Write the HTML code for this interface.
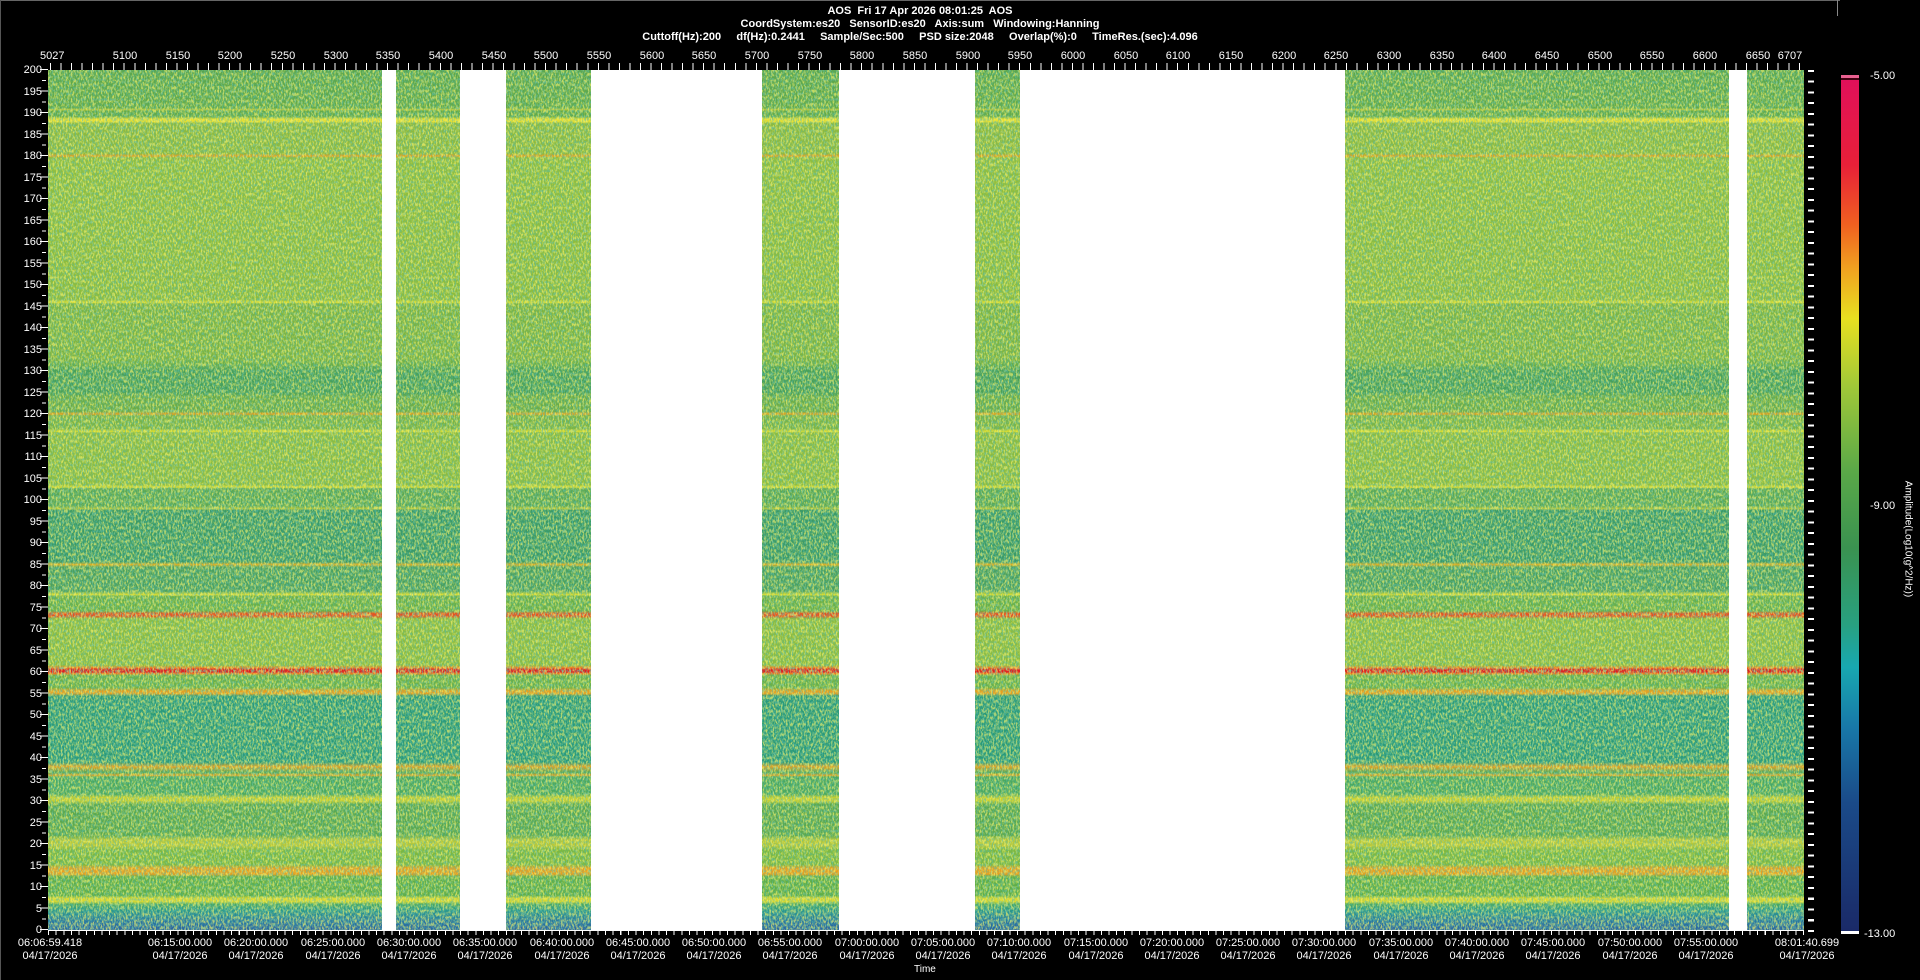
<!DOCTYPE html>
<html><head><meta charset="utf-8">
<style>
html,body{margin:0;padding:0;background:#000;}
body{width:1920px;height:980px;position:relative;overflow:hidden;font-family:"Liberation Sans",Arial,sans-serif;color:#fff;font-size:11px;}
.t{position:absolute;white-space:nowrap;}
.h{position:absolute;left:0;width:1840px;text-align:center;font-weight:bold;font-size:11px;white-space:pre;}
#plot{position:absolute;left:48px;top:70px;width:1756px;height:860px;
background:linear-gradient(to top,
#2a62a0 0%,#2a78a0 1%,#2a9a8c 2.3%,#4aa862 3%,#d8d830 3.3%,#d8d830 3.7%,#5fae48 4%,#5fae48 6.2%,#e8a020 6.5%,#e8a020 7.2%,#7cb840 7.6%,#7cb840 9.3%,#b8c838 9.8%,#b8c838 10.5%,#5aa850 11%,#5aa850 14.6%,#c8d030 15%,#c8d030 15.4%,#4aa860 15.8%,#4aa860 17.8%,#e8a020 18%,#4aa860 18.3%,#e8a020 19%,#2a9a7a 19.5%,#2a9a7a 27.2%,#e8a020 27.5%,#e8a020 27.8%,#6ab048 28.2%,#6ab048 29.6%,#f08020 29.8%,#e02020 30%,#e02020 30.3%,#f08020 30.5%,#8cbc40 30.8%,#8cbc40 36.2%,#e85020 36.5%,#e85020 36.8%,#6ab048 37.1%,#6ab048 38.8%,#e0e030 39%,#4aa060 39.4%,#4aa060 42.2%,#e8b020 42.5%,#3a9a68 42.8%,#3a9a68 48.8%,#b8c838 49%,#5aa855 49.3%,#5aa855 51.3%,#e0e030 51.5%,#8cbc40 51.8%,#8cbc40 57.8%,#e0e030 58%,#7ab445 58.3%,#7ab445 59.8%,#e8a020 60%,#6aac48 60.3%,#6aac48 62%,#48a05a 62.5%,#48a05a 65%,#6aae48 65.8%,#7cb442 66.5%,#7cb442 72.8%,#e0e030 73%,#8cbc3e 73.3%,#90be3e 89.8%,#e8a020 90%,#8cba40 90.3%,#8cba40 93.8%,#e8e030 94%,#e8e030 94.3%,#62aa4a 94.6%,#62aa4a 95.2%,#b8c838 95.4%,#62aa4a 95.6%,#5aa64e 100%);}
#plot svg{position:absolute;left:0;top:0;}
.gap{position:absolute;top:0;height:860px;background:#fff;}
.yl{position:absolute;right:1878px;text-align:right;font-size:11px;line-height:12px;}
.xl{position:absolute;top:50px;transform:translateX(-50%);font-size:11px;}
.bl{position:absolute;top:937px;transform:translateX(-50%);font-size:11px;line-height:13px;text-align:center;}
</style></head><body>
<div style="position:absolute;left:0;top:0;width:1840px;height:1px;background:#666"></div>
<div style="position:absolute;left:0;top:0;width:1px;height:980px;background:#555"></div>
<div style="position:absolute;left:1837px;top:0;width:1px;height:16px;background:#888"></div>
<div class="h" style="top:5px">AOS  Fri 17 Apr 2026 08:01:25  AOS</div>
<div class="h" style="top:18px">CoordSystem:es20   SensorID:es20   Axis:sum   Windowing:Hanning</div>
<div class="h" style="top:31px">Cuttoff(Hz):200     df(Hz):0.2441     Sample/Sec:500     PSD size:2048     Overlap(%):0     TimeRes.(sec):4.096</div>

<div id="plot">
<svg width="1756" height="860"><filter id="n" x="0" y="0" width="100%" height="100%"><feTurbulence type="fractalNoise" baseFrequency="0.6 0.3" numOctaves="2" seed="3"/><feColorMatrix type="matrix" values="0 0 0 0 0.88  0 0 0 0 0.88  0 0 0 0 0.15  0 0 0 4 -1.7"/></filter><rect width="1756" height="860" filter="url(#n)" opacity="0.7"/><filter id="m" x="0" y="0" width="100%" height="100%"><feTurbulence type="fractalNoise" baseFrequency="0.7 0.35" numOctaves="2" seed="9"/><feColorMatrix type="matrix" values="0 0 0 0 0.1  0 0 0 0 0.5  0 0 0 0 0.4  0 0 0 4 -1.8"/></filter><rect width="1756" height="860" filter="url(#m)" opacity="0.6"/></svg>
<div class="gap" style="left:334px;width:14px"></div>
<div class="gap" style="left:412px;width:46px"></div>
<div class="gap" style="left:543px;width:171px"></div>
<div class="gap" style="left:791px;width:136px"></div>
<div class="gap" style="left:972px;width:325px"></div>
<div class="gap" style="left:1681px;width:18px"></div>
</div>

<div style="position:absolute;left:40px;top:69px;width:8px;height:862px;background:repeating-linear-gradient(to bottom,#fff 0,#fff 1px,transparent 1px,transparent 21.5px)"></div>
<div style="position:absolute;left:42px;top:79.75px;width:4px;height:850px;background:repeating-linear-gradient(to bottom,#fff 0,#fff 1px,transparent 1px,transparent 21.5px)"></div>
<div style="position:absolute;left:1808px;top:70px;width:6px;height:862px;background:repeating-linear-gradient(to bottom,#fff 0,#fff 2px,transparent 2px,transparent 10.75px)"></div>
<div style="position:absolute;left:48px;top:63px;width:1756px;height:7px;background:repeating-linear-gradient(to right,transparent 0,transparent 2px,#fff 2px,#fff 3px,transparent 3px,transparent 10.535px)"></div>
<div style="position:absolute;left:48px;top:930px;width:1756px;height:5px;background:repeating-linear-gradient(to right,#fff 0,#fff 1px,transparent 1px,transparent 7.63px)"></div>
<div style="position:absolute;left:48px;top:930px;width:1756px;height:1px;background:#fff"></div>

<div class="t" style="left:40px;top:50px">5027</div>
<div class="xl" style="left:125px">5100</div><div class="xl" style="left:178px">5150</div><div class="xl" style="left:230px">5200</div><div class="xl" style="left:283px">5250</div><div class="xl" style="left:336px">5300</div><div class="xl" style="left:388px">5350</div><div class="xl" style="left:441px">5400</div><div class="xl" style="left:494px">5450</div><div class="xl" style="left:546px">5500</div><div class="xl" style="left:599px">5550</div><div class="xl" style="left:652px">5600</div><div class="xl" style="left:704px">5650</div><div class="xl" style="left:757px">5700</div><div class="xl" style="left:810px">5750</div><div class="xl" style="left:862px">5800</div><div class="xl" style="left:915px">5850</div><div class="xl" style="left:968px">5900</div><div class="xl" style="left:1020px">5950</div><div class="xl" style="left:1073px">6000</div><div class="xl" style="left:1126px">6050</div><div class="xl" style="left:1178px">6100</div><div class="xl" style="left:1231px">6150</div><div class="xl" style="left:1284px">6200</div><div class="xl" style="left:1336px">6250</div><div class="xl" style="left:1389px">6300</div><div class="xl" style="left:1442px">6350</div><div class="xl" style="left:1494px">6400</div><div class="xl" style="left:1547px">6450</div><div class="xl" style="left:1600px">6500</div><div class="xl" style="left:1652px">6550</div><div class="xl" style="left:1705px">6600</div><div class="xl" style="left:1758px">6650</div><div class="xl" style="left:1790px">6707</div>

<div class="yl" style="top:64px">200</div><div class="yl" style="top:85.5px">195</div><div class="yl" style="top:107px">190</div><div class="yl" style="top:128.5px">185</div><div class="yl" style="top:150px">180</div><div class="yl" style="top:171.5px">175</div><div class="yl" style="top:193px">170</div><div class="yl" style="top:214.5px">165</div><div class="yl" style="top:236px">160</div><div class="yl" style="top:257.5px">155</div><div class="yl" style="top:279px">150</div><div class="yl" style="top:300.5px">145</div><div class="yl" style="top:322px">140</div><div class="yl" style="top:343.5px">135</div><div class="yl" style="top:365px">130</div><div class="yl" style="top:386.5px">125</div><div class="yl" style="top:408px">120</div><div class="yl" style="top:429.5px">115</div><div class="yl" style="top:451px">110</div><div class="yl" style="top:472.5px">105</div><div class="yl" style="top:494px">100</div><div class="yl" style="top:515.5px">95</div><div class="yl" style="top:537px">90</div><div class="yl" style="top:558.5px">85</div><div class="yl" style="top:580px">80</div><div class="yl" style="top:601.5px">75</div><div class="yl" style="top:623px">70</div><div class="yl" style="top:644.5px">65</div><div class="yl" style="top:666px">60</div><div class="yl" style="top:687.5px">55</div><div class="yl" style="top:709px">50</div><div class="yl" style="top:730.5px">45</div><div class="yl" style="top:752px">40</div><div class="yl" style="top:773.5px">35</div><div class="yl" style="top:795px">30</div><div class="yl" style="top:816.5px">25</div><div class="yl" style="top:838px">20</div><div class="yl" style="top:859.5px">15</div><div class="yl" style="top:881px">10</div><div class="yl" style="top:902.5px">5</div><div class="yl" style="top:924px">0</div>

<div class="bl" style="left:50px">06:06:59.418<br>04/17/2026</div>
<div class="bl" style="left:180px">06:15:00.000<br>04/17/2026</div><div class="bl" style="left:256px">06:20:00.000<br>04/17/2026</div><div class="bl" style="left:333px">06:25:00.000<br>04/17/2026</div><div class="bl" style="left:409px">06:30:00.000<br>04/17/2026</div><div class="bl" style="left:485px">06:35:00.000<br>04/17/2026</div><div class="bl" style="left:562px">06:40:00.000<br>04/17/2026</div><div class="bl" style="left:638px">06:45:00.000<br>04/17/2026</div><div class="bl" style="left:714px">06:50:00.000<br>04/17/2026</div><div class="bl" style="left:790px">06:55:00.000<br>04/17/2026</div><div class="bl" style="left:867px">07:00:00.000<br>04/17/2026</div><div class="bl" style="left:943px">07:05:00.000<br>04/17/2026</div><div class="bl" style="left:1019px">07:10:00.000<br>04/17/2026</div><div class="bl" style="left:1096px">07:15:00.000<br>04/17/2026</div><div class="bl" style="left:1172px">07:20:00.000<br>04/17/2026</div><div class="bl" style="left:1248px">07:25:00.000<br>04/17/2026</div><div class="bl" style="left:1324px">07:30:00.000<br>04/17/2026</div><div class="bl" style="left:1401px">07:35:00.000<br>04/17/2026</div><div class="bl" style="left:1477px">07:40:00.000<br>04/17/2026</div><div class="bl" style="left:1553px">07:45:00.000<br>04/17/2026</div><div class="bl" style="left:1630px">07:50:00.000<br>04/17/2026</div><div class="bl" style="left:1706px">07:55:00.000<br>04/17/2026</div><div class="bl" style="left:1807px">08:01:40.699<br>04/17/2026</div>
<div class="t" style="left:914px;top:964px;font-size:10px">Time</div>

<div style="position:absolute;left:1841px;top:75px;width:18px;height:3px;background:#e86090"></div>
<div style="position:absolute;left:1841px;top:78px;width:18px;height:2px;background:#400010"></div>
<div style="position:absolute;left:1841px;top:80px;width:18px;height:851px;background:linear-gradient(to bottom,#e0105a 0%,#e82038 10%,#f06020 17%,#f0a020 22%,#e8e020 28%,#a0c838 36%,#5aa848 46%,#3a9250 55%,#28a080 64%,#18a8b0 69%,#1878a8 76%,#1a4a88 85%,#1a2a68 100%)"></div>
<div style="position:absolute;left:1841px;top:931px;width:18px;height:3px;background:#fff"></div>
<div class="t" style="left:1870px;top:70px">-5.00</div>
<div class="t" style="left:1870px;top:500px">-9.00</div>
<div class="t" style="left:1864px;top:928px">-13.00</div>
<div class="t" style="left:1908px;top:539px;font-size:10px;transform:translate(-50%,-50%) rotate(90deg)">Amplitude(Log10(g^2/Hz))</div>
</body></html>
